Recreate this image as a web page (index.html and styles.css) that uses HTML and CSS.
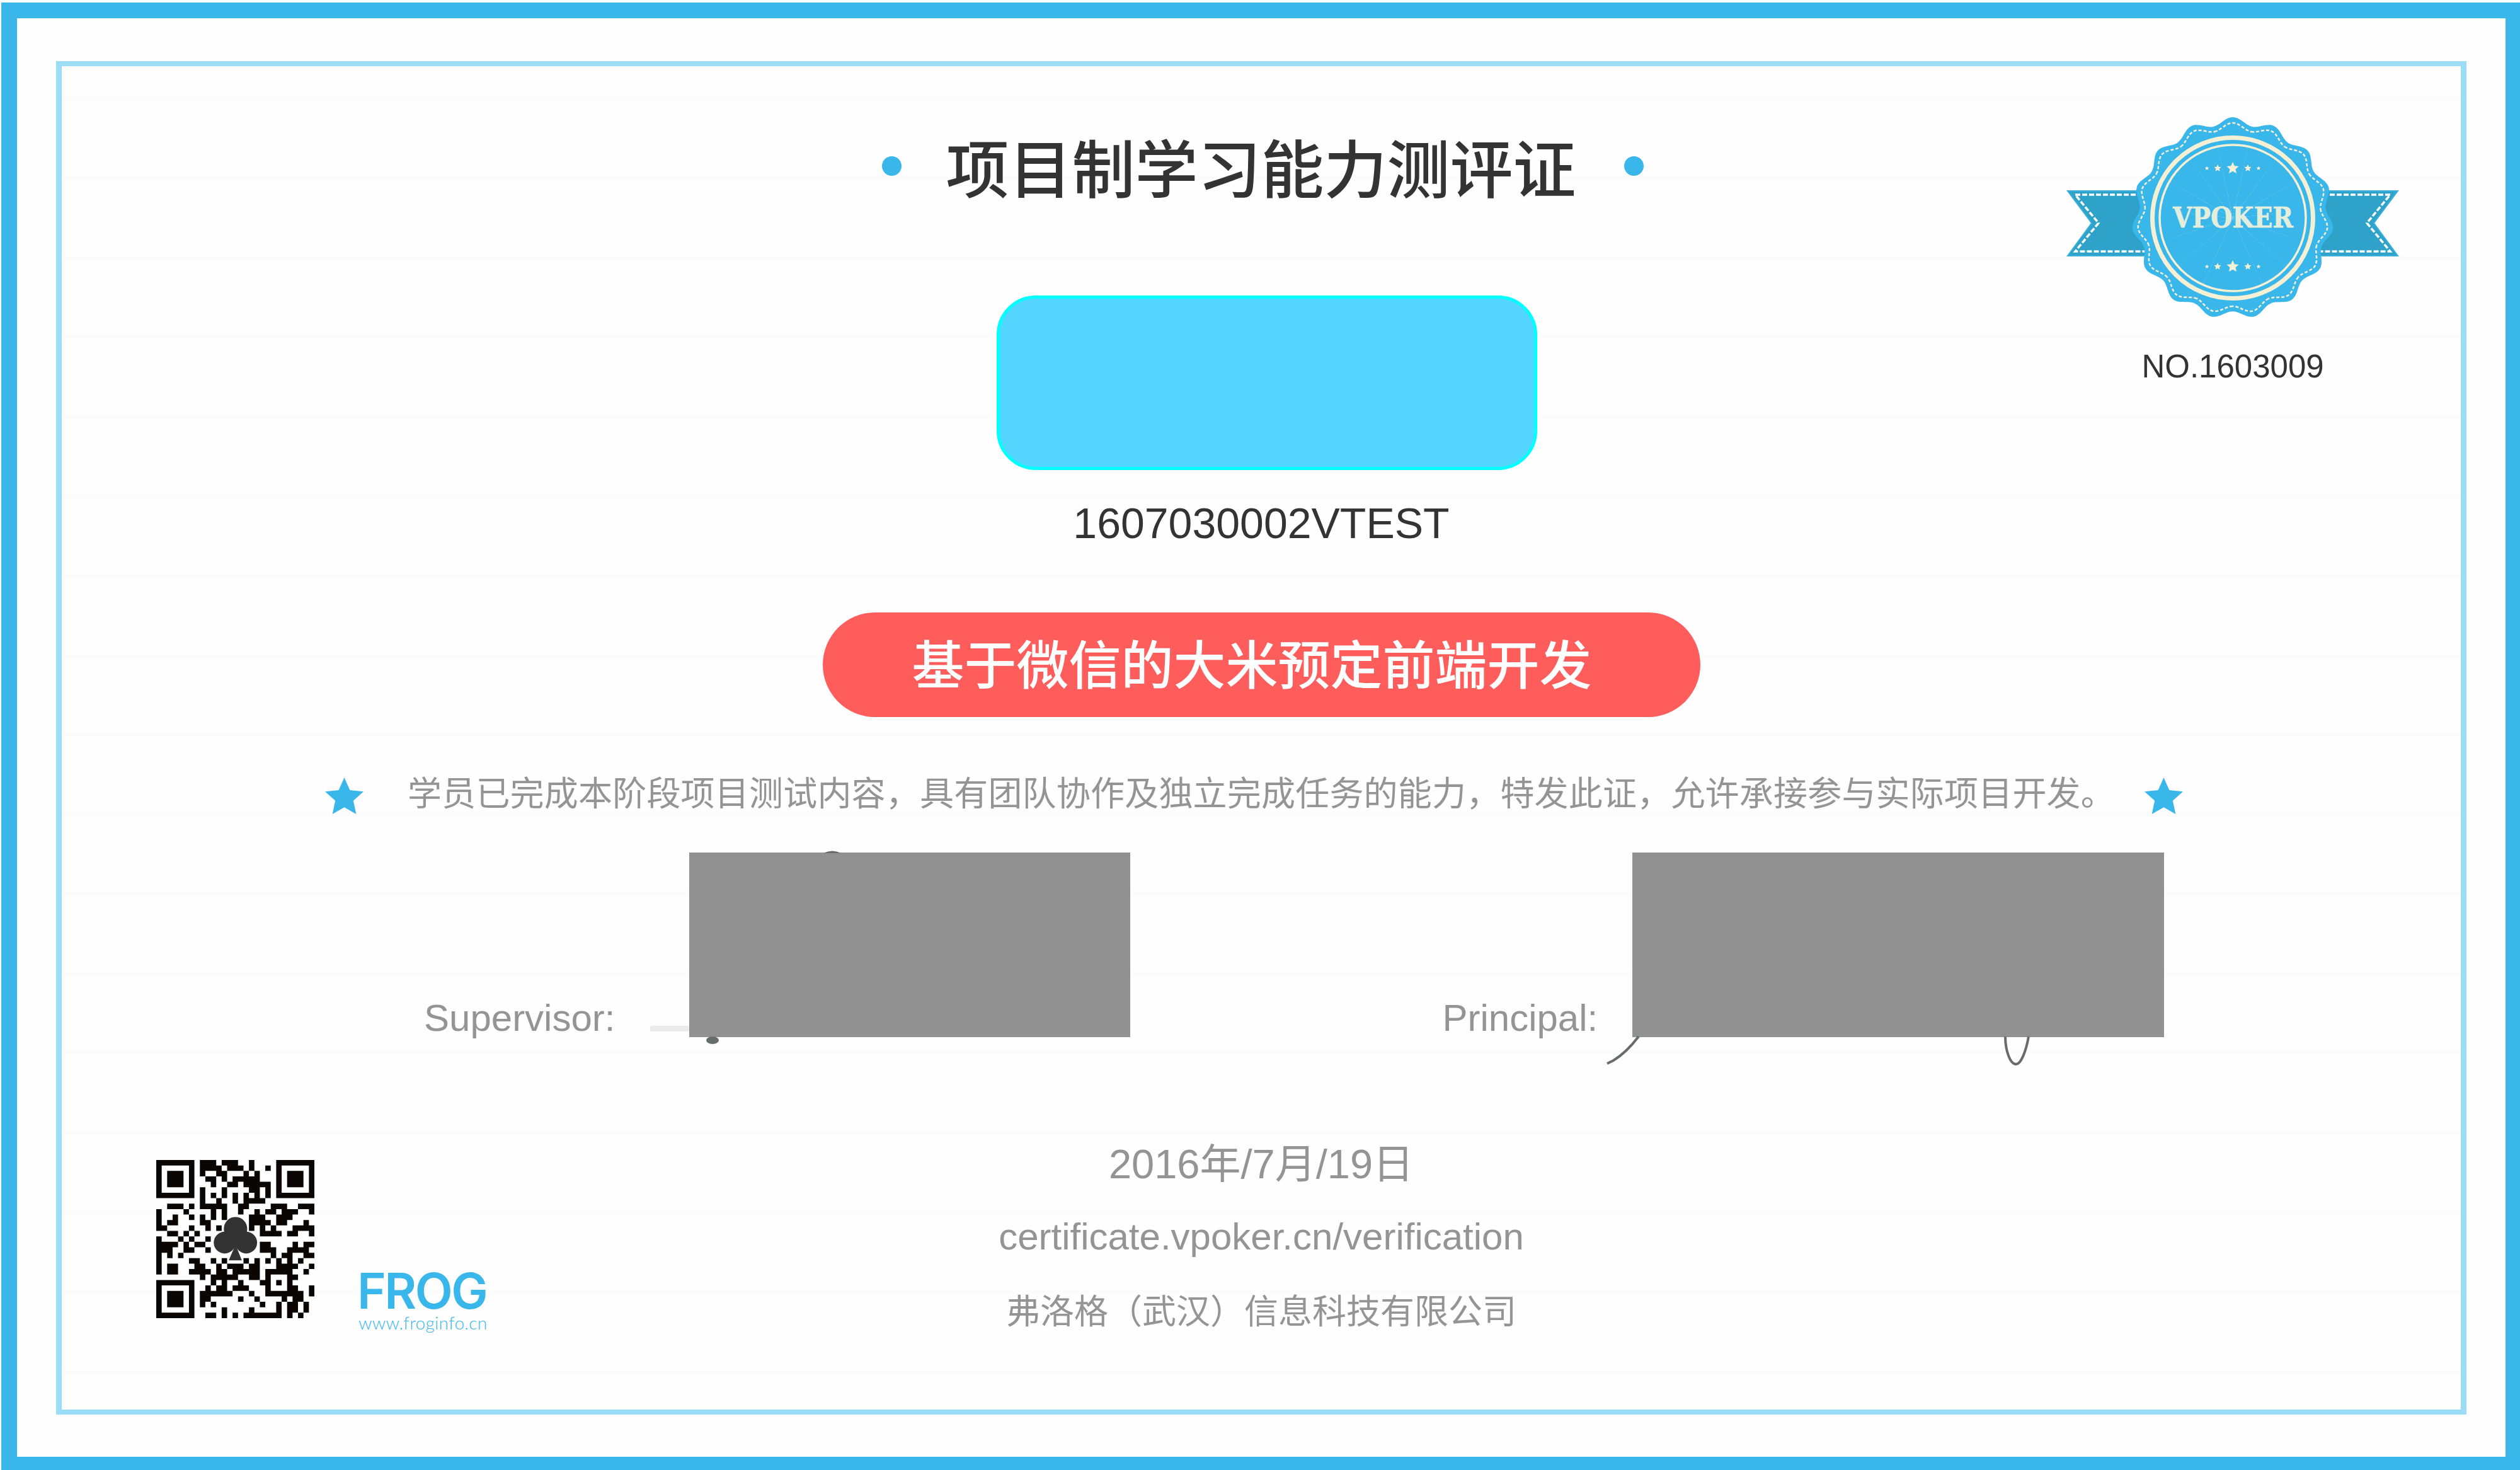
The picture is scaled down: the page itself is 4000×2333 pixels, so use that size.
FILE: index.html
```html
<!DOCTYPE html>
<html lang="zh-CN">
<head>
<meta charset="utf-8">
<title>项目制学习能力测评证</title>
<link rel="stylesheet" href="styles.css">
</head>
<body>
<div class="sheet">
  <div class="frame">
    <aside class="seal">
      <svg class="seal-art" viewBox="-265 -160 530 322" aria-label="VPOKER">
        <defs>
          <path id="lobe" d="M0 0L-31-145C-20-147-12-160 0-160C12-160 20-147 31-145Z"/>
          <path id="stitch" d="M-29.100-137C-19-139-11-151 0-151C11-151 19-139 29.100-137"/>
          <path id="pt" d="M0-1L.276-.38L.951-.309L.447.145L.588.809L0 .47L-.588.809L-.447.145L-.951-.309L-.276-.38Z"/>
        </defs>
        <g class="ribbon">
          <path d="M-262-43H-100V60H-262L-224 8Z"/>
          <path d="M262-43H100V60H262L224 8Z"/>
        </g>
        <g class="ribbon-stitch">
          <path d="M-132-37H-250L-213 8L-250 53H-132"/>
          <path d="M132-37H250L213 8L250 53H132"/>
        </g>
        <g class="seal-body">
          <use href="#lobe"/><use href="#lobe" transform="rotate(24)"/><use href="#lobe" transform="rotate(48)"/><use href="#lobe" transform="rotate(72)"/><use href="#lobe" transform="rotate(96)"/><use href="#lobe" transform="rotate(120)"/><use href="#lobe" transform="rotate(144)"/><use href="#lobe" transform="rotate(168)"/><use href="#lobe" transform="rotate(192)"/><use href="#lobe" transform="rotate(216)"/><use href="#lobe" transform="rotate(240)"/><use href="#lobe" transform="rotate(264)"/><use href="#lobe" transform="rotate(288)"/><use href="#lobe" transform="rotate(312)"/><use href="#lobe" transform="rotate(336)"/>
        </g>
        <g class="seal-stitch">
          <use href="#stitch"/><use href="#stitch" transform="rotate(24)"/><use href="#stitch" transform="rotate(48)"/><use href="#stitch" transform="rotate(72)"/><use href="#stitch" transform="rotate(96)"/><use href="#stitch" transform="rotate(120)"/><use href="#stitch" transform="rotate(144)"/><use href="#stitch" transform="rotate(168)"/><use href="#stitch" transform="rotate(192)"/><use href="#stitch" transform="rotate(216)"/><use href="#stitch" transform="rotate(240)"/><use href="#stitch" transform="rotate(264)"/><use href="#stitch" transform="rotate(288)"/><use href="#stitch" transform="rotate(312)"/><use href="#stitch" transform="rotate(336)"/>
        </g>
        <circle class="ring-thick" r="127.500"/>
        <circle class="ring-thin" r="116"/>
        <g class="seal-stars">
          <use href="#pt" transform="translate(0 -79) scale(10)"/>
          <use href="#pt" transform="translate(-24 -79) scale(6)"/>
          <use href="#pt" transform="translate(24 -79) scale(6)"/>
          <use href="#pt" transform="translate(-41 -79) scale(3.500)"/>
          <use href="#pt" transform="translate(41 -79) scale(3.500)"/>
          <use href="#pt" transform="translate(0 77) scale(10)"/>
          <use href="#pt" transform="translate(-24 77) scale(6)"/>
          <use href="#pt" transform="translate(24 77) scale(6)"/>
          <use href="#pt" transform="translate(-41 77) scale(3.500)"/>
          <use href="#pt" transform="translate(41 77) scale(3.500)"/>
        </g>
        <text class="seal-text" x="-95" y="15" textLength="191" lengthAdjust="spacingAndGlyphs">VPOKER</text>
      </svg>
      <div class="seal-no">NO.1603009</div>
    </aside>

    <main class="content">
      <div class="title-row">
        <span class="dot dot-left"></span>
        <h1 class="title">项目制学习能力测评证</h1>
        <span class="dot dot-right"></span>
      </div>
      <div class="photo"></div>
      <div class="student-id">1607030002VTEST</div>
      <div class="project">基于微信的大米预定前端开发</div>
      <div class="statement">
        <svg class="star star-left" viewBox="-.951 -1 1.902 1.809"><path d="M0-1L.276-.38L.951-.309L.447.145L.588.809L0 .47L-.588.809L-.447.145L-.951-.309L-.276-.38Z"/></svg>
        <p class="statement-text">学员已完成本阶段项目测试内容，具有团队协作及独立完成任务的能力，特发此证，允许承接参与实际项目开发。</p>
        <svg class="star star-right" viewBox="-.951 -1 1.902 1.809"><path d="M0-1L.276-.38L.951-.309L.447.145L.588.809L0 .47L-.588.809L-.447.145L-.951-.309L-.276-.38Z"/></svg>
      </div>
      <div class="signatures">
        <div class="sig sig-supervisor">
          <span class="sig-label">Supervisor:</span>
          <div class="sig-box">
            <svg class="scribble" viewBox="0 0 700 293">
              <rect class="scribble-bar" x="-62" y="275" width="62" height="9" rx="3"/>
              <path class="scribble-ink" d="M213 1Q227-6 241 1Z"/>
              <ellipse class="scribble-ink" cx="37" cy="298" rx="10" ry="6"/>
            </svg>
          </div>
        </div>
        <div class="sig sig-principal">
          <span class="sig-label">Principal:</span>
          <div class="sig-box sig-box-wide">
            <svg class="scribble" viewBox="0 0 844 293">
              <path class="scribble-line" d="M10 292Q-10 318-30 330L-40 335"/>
              <path class="scribble-line" d="M592 292C592 315 600 336 609 336C617 336 625 315 629 292"/>
            </svg>
          </div>
        </div>
      </div>
      <footer class="footer">
        <div class="brand">
          <svg class="qr" viewBox="0 0 29 29" aria-label="QR code">
            <path class="qr-finder" d="M0 0h7v7h-7zM1 1v5h5v-5zM2 2h3v3h-3zM22 0h7v7h-7zM23 1v5h5v-5zM24 2h3v3h-3zM0 22h7v7h-7zM1 23v5h5v-5zM2 24h3v3h-3z"/>
            <path class="qr-cells" d="M8 .5h3M12 .5h3M17 .5h1
M8 1.500h4M13 1.500h3M17 1.500h1M20 1.500h1
M8 2.500h1M11 2.500h2M16 2.500h1M18 2.500h1
M9 3.500h2M12 3.500h1M14 3.500h5
M10 4.500h1M13 4.500h2M16 4.500h5
M8 5.500h1M12 5.500h1M17 5.500h2M20 5.500h1
M8 6.500h1M10 6.500h1M12 6.500h1M14 6.500h1M16 6.500h1M18 6.500h1M20 6.500h1
M8 7.500h1M11 7.500h1M14 7.500h1M16 7.500h4
M2 8.500h3M6 8.500h1M8 8.500h5M15 8.500h2M21 8.500h3M26 8.500h3
M0 9.500h1M5 9.500h1M10 9.500h1M12 9.500h1M15 9.500h1M18 9.500h1M20 9.500h2M23 9.500h3M28 9.500h1
M0 10.500h1M3 10.500h1M6 10.500h1M8 10.500h1M10 10.500h1M12 10.500h1M17 10.500h3M22 10.500h3
M0 11.500h1M2 11.500h2M8 11.500h2M17 11.500h4M22 11.500h2M27 11.500h1
M0 12.500h2M6 12.500h1M9 12.500h1M11 12.500h1M17 12.500h1M19 12.500h1M21 12.500h1M25 12.500h4
M2 13.500h2M5 13.500h1M7 13.500h1M19 13.500h4M24 13.500h2M28 13.500h1
M0 14.500h1M4 14.500h1M6 14.500h1M9 14.500h1
M0 15.500h4M5 15.500h1M7 15.500h2M19 15.500h2M25 15.500h1M27 15.500h2
M0 16.500h3M5 16.500h2M9 16.500h1M19 16.500h3M24 16.500h4
M0 17.500h1M2 17.500h1M4 17.500h1M21 17.500h1M23 17.500h2M27 17.500h2
M0 18.500h1M6 18.500h2M10 18.500h1M12 18.500h1M16 18.500h1M18 18.500h1M20 18.500h1M22 18.500h1M24 18.500h1M26 18.500h1
M0 19.500h1M2 19.500h2M7 19.500h2M11 19.500h1M13 19.500h3M17 19.500h2M22 19.500h4M28 19.500h1
M0 20.500h1M2 20.500h2M6 20.500h4M11 20.500h2M14 20.500h5M20 20.500h5M27 20.500h1
M8 21.500h1M10 21.500h5M17 21.500h2M20 21.500h1M24 21.500h2
M10 22.500h1M12 22.500h1M15 22.500h1M19 22.500h2M22 22.500h1M24 22.500h1
M9 23.500h1M11 23.500h2M14 23.500h3M20 23.500h1M24 23.500h2M28 23.500h1
M8 24.500h6M17 24.500h1M20 24.500h7M28 24.500h1
M8 25.500h2M15 25.500h1M18 25.500h1M23 25.500h1M25 25.500h2
M8 26.500h1M10 26.500h1M19 26.500h1M22 26.500h1M24 26.500h2M27 26.500h1
M12 27.500h1M17 27.500h1M22 27.500h1M24 27.500h2M27 27.500h1
M9 28.500h2M12 28.500h1M14 28.500h1M16 28.500h7M24 28.500h1M26 28.500h1"/>
            <g class="qr-club">
              <circle cx="14.540" cy="12.600" r="2.150"/>
              <circle cx="12.550" cy="15.150" r="2"/>
              <circle cx="16.500" cy="15.150" r="2"/>
              <path d="M13.300 13.500h2.500v2.500h-2.500zM14.540 15.500L15.700 18.400H13.300Z"/>
            </g>
          </svg>
          <div class="frog">
            <div class="frog-name">FROG</div>
            <div class="frog-url">www.froginfo.cn</div>
          </div>
        </div>
        <div class="issuer">
          <div class="issue-date">2016年/7月/19日</div>
          <div class="issue-url">certificate.vpoker.cn/verification</div>
          <div class="issue-company">弗洛格（武汉）信息科技有限公司</div>
        </div>
        <div class="footer-spacer"></div>
      </footer>
    </main>
  </div>
</div>
</body>
</html>
```

FILE: styles.css
```css
* {
  box-sizing: border-box;
}

html,
body {
  margin: 0;
  background: #fff;
}

body {
  width: 4000px;
  height: 2333px;
  padding: 4px 0 0 2px;
  overflow: hidden;
  font-family: "Liberation Sans", "Noto Sans CJK SC", sans-serif;
}

.sheet {
  width: 3998px;
  height: 2329px;
  border-style: solid;
  border-color: #3ab7ea;
  border-width: 25px 23px 21px 25px;
  padding: 68px 62px 67px 62px;
  background: #fefefe;
}

.frame {
  position: relative;
  height: 100%;
  border-style: solid;
  border-color: #9bdcf7;
  border-width: 8px 9px;
  background: repeating-linear-gradient(to bottom, #fefefe 0 47px, #fcfcfc 47px 56px, #fefefe 56px 126.25px);
}

.seal {
  position: absolute;
  top: 81px;
  left: 3181px;
  width: 530px;
  display: flex;
  flex-direction: column;
  align-items: center;
}

.seal-art {
  display: block;
  width: 530px;
  height: 322px;
}

.ribbon path {
  fill: #2ea2c9;
  stroke: #3ab0dc;
  stroke-width: 2;
}

.ribbon-stitch path {
  fill: none;
  stroke: #fff;
  stroke-width: 3.5;
  stroke-dasharray: 8 3;
}

.seal-body use {
  fill: #3ab7ea;
}

.seal-stitch use {
  fill: none;
  stroke: #f5efd3;
  stroke-width: 2.5;
  stroke-dasharray: 5 3;
}

.ring-thick {
  fill: none;
  stroke: #f5efd3;
  stroke-width: 7;
}

.ring-thin {
  fill: none;
  stroke: #f5efd3;
  stroke-width: 3.5;
}

.seal-stars use {
  fill: #f5efd3;
}

.seal-text {
  font-family: "DejaVu Serif", serif;
  font-weight: 700;
  font-size: 45px;
  fill: #e3eedd;
  stroke: #f5efd3;
  stroke-width: 0.5;
}

.seal-no {
  margin-top: 44px;
  font-size: 51px;
  line-height: 60px;
  color: #333;
}

.content {
  display: flex;
  flex-direction: column;
  align-items: center;
  height: 100%;
}

.title-row {
  display: flex;
  align-items: center;
  margin: 108px 0 0 4px;
}

.title {
  margin: 0 76px 0 71px;
  font-family: "Noto Sans CJK SC", sans-serif;
  font-size: 100px;
  line-height: 100px;
  font-weight: 500;
  color: #333;
}

.dot {
  width: 31px;
  height: 31px;
  border-radius: 50%;
  background: #3ab7ea;
}

.photo {
  width: 858px;
  height: 277px;
  margin: 156px 0 0 18px;
  border: 5px solid #0ff;
  border-radius: 62px;
  background: #54d5ff;
}

.student-id {
  margin-top: 44px;
  font-size: 68px;
  line-height: 80px;
  color: #333;
}

.project {
  width: 1393px;
  height: 166px;
  margin-top: 102px;
  border-radius: 83px;
  background: #ff5c5c;
  color: #fff;
  font-family: "Noto Sans CJK SC", sans-serif;
  font-size: 83px;
  font-weight: 500;
  line-height: 156px;
  text-align: center;
  padding-right: 30px;
}

.statement {
  display: flex;
  align-items: flex-start;
  margin: 88px 23px 0 0;
}

.statement-text {
  margin: 0 47px 0 70px;
  font-family: "Noto Sans CJK SC", sans-serif;
  font-size: 54px;
  letter-spacing: 0.2px;
  line-height: 60px;
  white-space: nowrap;
  color: #949494;
}

.star {
  width: 61px;
  height: 58px;
  margin-top: 8px;
  margin-bottom: -6px;
  fill: #3ab7ea;
}

.signatures {
  display: flex;
  align-self: stretch;
  align-items: flex-end;
  margin-top: 67px;
  padding-left: 575px;
}

.sig {
  display: flex;
  align-items: flex-end;
}

.sig-principal {
  margin-left: 495px;
}

.sig-label {
  font-size: 60px;
  line-height: 60px;
  color: #949494;
}

.sig-supervisor .sig-label {
  margin-right: 118px;
}

.sig-principal .sig-label {
  margin-right: 55px;
}

.sig-box {
  position: relative;
  width: 700px;
  height: 293px;
  background: #919191;
}

.sig-box-wide {
  width: 844px;
}

.scribble {
  position: absolute;
  top: 0;
  left: 0;
  width: 100%;
  height: 100%;
  overflow: visible;
}

.scribble-bar {
  fill: #ebebeb;
}

.scribble-ink {
  fill: #666c6c;
}

.scribble-line {
  fill: none;
  stroke: #666c6c;
  stroke-width: 4;
}

.footer {
  display: grid;
  grid-template-columns: 1fr auto 1fr;
  align-self: stretch;
  margin-top: 162px;
}

.brand {
  display: flex;
  align-items: flex-start;
  padding-left: 150px;
}

.qr {
  display: block;
  flex: none;
  width: 251px;
  height: 251px;
  margin-top: 33px;
}

.qr-finder {
  fill: #0a0603;
  fill-rule: evenodd;
}

.qr-cells {
  fill: none;
  stroke: #0a0603;
  stroke-width: 1;
}

.qr-club {
  fill: #333;
}

.frog {
  margin: 207px 0 0 68px;
}

.frog-name {
  font-family: "Inter", sans-serif;
  font-size: 78px;
  font-weight: 600;
  line-height: 68px;
  letter-spacing: -2.5px;
  color: #3ab7ea;
}

.frog-url {
  padding-left: 2px;
  font-family: "Lato", sans-serif;
  font-size: 28px;
  font-weight: 300;
  line-height: 32px;
  letter-spacing: 0.3px;
  color: #3ab7ea;
  white-space: nowrap;
}

.issuer {
  display: flex;
  flex-direction: column;
  align-items: center;
  color: #949494;
}

.issue-date {
  font-size: 65px;
  line-height: 80px;
}

.issue-url {
  margin-top: 40px;
  font-size: 60px;
  line-height: 70px;
}

.issue-company {
  margin-top: 45px;
  font-family: "Noto Sans CJK SC", sans-serif;
  font-size: 54px;
  line-height: 70px;
}
```
